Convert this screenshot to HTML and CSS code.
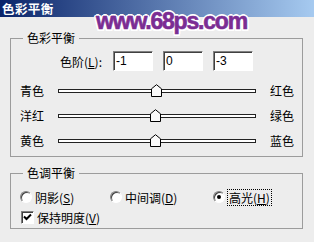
FILE: index.html
```html
<!DOCTYPE html>
<html lang="zh">
<head>
  <meta charset="UTF-8">
  <title>色彩平衡</title>
  <link rel="stylesheet" href="styles.css">
</head>
<body>

<div class="window">
  <div class="titlebar">色彩平衡</div>
  <div class="watermark">www.68ps.com</div>

  <div class="content">
    <fieldset class="group balance">
      <legend>色彩平衡</legend>
      <div class="levels">
        <label>色阶(<u>L</u>):</label>
        <input type="text" value="-1">
        <input type="text" value="0">
        <input type="text" value="-3">
      </div>
      <div class="sliders">
        <div class="slider-row">
          <span class="name">青色</span>
          <div class="track"><span class="thumb" style="left:92px"><svg width="11" height="13" viewBox="0 0 11 13"><path d="M0.5 12.5V4.8L5.5 0.7L10.5 4.8V12.5Z" fill="#fafafa" stroke="#000"/></svg></span></div>
          <span class="name-r">红色</span>
        </div>
        <div class="slider-row">
          <span class="name">洋红</span>
          <div class="track"><span class="thumb" style="left:91px"><svg width="11" height="13" viewBox="0 0 11 13"><path d="M0.5 12.5V4.8L5.5 0.7L10.5 4.8V12.5Z" fill="#fafafa" stroke="#000"/></svg></span></div>
          <span class="name-r">绿色</span>
        </div>
        <div class="slider-row">
          <span class="name">黄色</span>
          <div class="track"><span class="thumb" style="left:91px"><svg width="11" height="13" viewBox="0 0 11 13"><path d="M0.5 12.5V4.8L5.5 0.7L10.5 4.8V12.5Z" fill="#fafafa" stroke="#000"/></svg></span></div>
          <span class="name-r">蓝色</span>
        </div>
      </div>
    </fieldset>

    <fieldset class="group tone">
      <legend>色调平衡</legend>
      <div class="options">
        <div class="option opt-shadow"><span class="radio"></span><span>阴影(<u>S</u>)</span></div>
        <div class="option opt-mid"><span class="radio"></span><span>中间调(<u>D</u>)</span></div>
        <div class="option"><span class="radio on"></span><span class="focus">高光(<u>H</u>)</span></div>
      </div>
      <div class="keep">
        <span class="check"><svg width="9" height="9" viewBox="0 0 9 9"><path d="M1 3.5L3.5 6L8 1.5" fill="none" stroke="#000" stroke-width="2"/></svg></span>
        <span>保持明度(<u>V</u>)</span>
      </div>
    </fieldset>
  </div>
</div>

</body>
</html>
```

FILE: styles.css
```css
* { box-sizing: border-box; }
body { margin: 0; background: #ededed; color: #000; font: 12px "Noto Sans CJK SC", sans-serif; }
.window { position: relative; width: 314px; height: 242px; overflow: hidden; }
.titlebar { height: 17px; line-height: 17px; padding-left: 2px; color: #fff; font-size: 12.5px; font-weight: bold; letter-spacing: 0.4px; background: linear-gradient(to right, #0a246a, #a6caf0); }
.watermark { position: absolute; left: 96px; top: 10px; font: bold 23px/23px "Liberation Sans", sans-serif; letter-spacing: -1.2px; color: #7b2d93;
  -webkit-text-stroke: 0.6px #7b2d93;
  text-shadow: 2px 0 #fff, -2px 0 #fff, 0 2px #fff, 0 -2px #fff, 1.5px 1.5px #fff, -1.5px 1.5px #fff, 1.5px -1.5px #fff, -1.5px -1.5px #fff; }
.content { padding: 0 11px 0 10px; }

.group { margin: 0; padding: 0; border: 1px solid #9c9c9c; min-width: 0; }
.group legend { margin-left: 12px; padding: 0 4px; line-height: 14px; }
.balance { margin-top: 14px; padding-bottom: 3px; }
.tone { margin-top: 9px; padding-bottom: 2px; }

.levels { display: flex; align-items: center; height: 20px; margin-top: 6px; }
.levels label { margin-left: 49px; width: 53px; }
.levels input { width: 40px; height: 20px; margin: 0 10px 0 0; padding: 0 2px; font: 12px "Liberation Sans", sans-serif; background: #fff;
  border: 1px solid; border-color: #808080 #fff #fff #808080; box-shadow: inset 1px 1px #404040; outline: none; }

.sliders { margin-top: 7px; }
.slider-row { display: flex; align-items: center; height: 25px; padding: 0 8px 0 9px; }
.name { width: 38px; }
.name-r { width: 24px; margin-left: 14px; }
.track { position: relative; flex: 1; height: 4px; background: #fff; border: 1px solid #222; }
.thumb { position: absolute; top: -6px; width: 11px; height: 13px; }
.thumb svg { display: block; }

.options { display: flex; align-items: center; height: 18px; margin-top: 8px; padding-left: 9px; }
.option { display: flex; align-items: center; gap: 3px; }
.opt-shadow { width: 90px; }
.opt-mid { width: 103px; }
.radio { position: relative; width: 12px; height: 12px; border-radius: 50%; background: #fff;
  border: 1px solid; border-color: #808080 #fff #fff #808080; box-shadow: inset 1px 1px #404040; }
.radio.on::after { content: ""; position: absolute; left: 3px; top: 3px; width: 4px; height: 4px; border-radius: 50%; background: #000; }
.focus { border: 1px dotted #000; padding: 0 1px; line-height: 15px; margin-left: -1px; }

.keep { display: flex; align-items: center; gap: 3px; height: 18px; margin-top: 2px; padding-left: 10px; }
.check { display: flex; align-items: center; justify-content: center; width: 13px; height: 13px; background: #fff;
  border: 1px solid; border-color: #808080 #fff #fff #808080; box-shadow: inset 1px 1px #404040; }
```
